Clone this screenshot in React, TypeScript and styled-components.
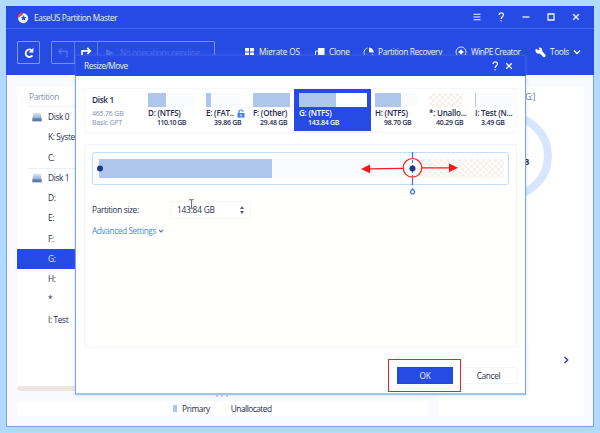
import React from "react";
import styled, { createGlobalStyle } from "styled-components";

const BLUE = "#264be4";
const INK = "#262b4d";
const FILL = "#aec6eb";

const Global = createGlobalStyle`
  * { box-sizing: border-box; }
  body { margin: 0; background: #b0daff; font-family: "Open Sans", "Noto Sans", sans-serif; color: ${INK}; }
  svg { display: block; flex: none; }
`;

const Desktop = styled.div`
  position: relative;
  width: 600px;
  height: 433px;
  padding: 6px;
  overflow: hidden;
`;

const Text = styled.span<{ $size?: number; $track?: number; $color?: string; $weight?: number }>`
  font-size: ${(p) => p.$size ?? 8.3}px;
  letter-spacing: ${(p) => p.$track ?? -0.36}px;
  font-weight: ${(p) => p.$weight ?? 480};
  color: ${(p) => p.$color ?? "inherit"};
  line-height: 12px;
  white-space: nowrap;
`;

const Window = styled.div`
  width: 588px;
  height: 421px;
  display: flex;
  flex-direction: column;
  background: #f8faff;
  border: 1px solid #7e9cf4;
  border-top: 0;
`;

const TitleBar = styled.header`
  height: 23px;
  flex: none;
  margin: 0 -1px;
  padding: 0 12.5px 0 11px;
  display: flex;
  align-items: center;
  background: ${BLUE};
  border-bottom: 1px solid #3e63ee;
  color: #eef2ff;
`;

const AppName = styled.div`
  display: flex;
  align-items: center;
  gap: 5px;
  flex: 1;
  padding-top: 1px;
`;

const WindowControls = styled.div`
  display: flex;
  gap: 12.7px;
  svg { width: 12px; height: 12px; }
`;

const Toolbar = styled.nav`
  height: 46px;
  flex: none;
  margin: 0 -1px;
  padding: 12px 13px 0 11px;
  display: flex;
  background: ${BLUE};
  color: #f3f6ff;
`;

const Reload = styled.button`
  width: 23px;
  height: 23px;
  padding: 0;
  display: grid;
  place-items: center;
  border: 1px solid #7e9bfa;
  border-radius: 1px;
  background: transparent;
`;

const History = styled.div`
  width: 164px;
  height: 23px;
  margin-left: 11px;
  display: flex;
  border: 1px solid #7890f4;
  border-radius: 1px;
`;

const HistoryCell = styled.div`
  width: 23px;
  height: 21px;
  display: grid;
  place-items: center;
  border-right: 1px solid #5e7bf0;
`;

const Pending = styled.div`
  display: flex;
  align-items: center;
  gap: 6px;
  height: 22px;
  padding-left: 8px;
`;

const Tools = styled.div`
  display: grid;
  grid-template-columns: 70px 49px 92px 80px 45px;
  margin-left: 29px;
  height: 22px;
`;

const Tool = styled.div`
  display: flex;
  align-items: center;
  gap: 4px;
`;

const Body = styled.main`
  flex: 1;
  display: grid;
  grid-template-columns: 410px 146px;
  column-gap: 11px;
  padding: 11px 0 10px 10px;
`;

const LeftColumn = styled.div`
  display: flex;
  flex-direction: column;
`;

const Tree = styled.section`
  height: 305px;
  display: flex;
  flex-direction: column;
  background: #fff;
`;

const TreeHeader = styled.div`
  height: 21px;
  margin-left: 12px;
  padding-top: 5px;
  display: flex;
  border-bottom: 1px solid #f0f3fa;
`;

const TreeRow = styled.div<{ $selected?: boolean; $ruled?: boolean }>`
  height: 20.25px;
  padding-left: 15px;
  display: grid;
  grid-template-columns: 16px 1fr;
  align-items: center;
  background: ${(p) => (p.$selected ? BLUE : p.$ruled ? "linear-gradient(90deg, #fff 11px, #e9eff8 11px) top / 100% 1px no-repeat" : "none")};
  color: ${(p) => (p.$selected ? "#e6ecff" : "inherit")};
`;

const ScrollTrack = styled.div`
  height: 5px;
  margin-top: auto;
  width: 260px;
  border-radius: 3px;
  background: #eee5e0;
`;

const Splitter = styled.div`
  height: 10px;
  display: flex;
  align-items: center;
  gap: 3px;
  padding-left: 199px;
`;

const Dot = styled.i`
  width: 2px;
  height: 2px;
  background: #d4cfd6;
`;

const Legend = styled.section`
  height: 15px;
  display: flex;
  align-items: center;
  padding-left: 156px;
  background: #fff;
`;

const Swatch = styled.i<{ $light?: boolean }>`
  width: 4px;
  height: 7px;
  margin-right: 5px;
  margin-left: ${(p) => (p.$light ? 12 : 0)}px;
  background: ${(p) => (p.$light ? "#fdfbf7" : FILL)};
`;

const Details = styled.section`
  display: flex;
  flex-direction: column;
  background: #fff;
`;

const DetailsTitle = styled.div`
  height: 25px;
  padding: 5px 49px 0 0;
  display: flex;
  justify-content: flex-end;
`;

const Gauge = styled.div`
  display: grid;
  margin-left: 26px;
  width: 88px;
  height: 90px;
  align-items: center;
  > * { grid-area: 1 / 1; }
  > span { padding: 12px 23px 0 0; text-align: right; }
`;

const NextButton = styled.div`
  margin: 155px 14px 0 auto;
`;

const Dialog = styled.section`
  position: absolute;
  left: 75px;
  top: 55px;
  width: 451px;
  height: 340px;
  display: flex;
  flex-direction: column;
  background: #fff;
  border: 1px solid #76a5e2;
  border-width: 0 1px 2px;
  border-bottom-color: #9dc3ee;
  box-shadow: 0 0 3px #6f94d855;
`;

const DialogBar = styled.header`
  height: 21px;
  flex: none;
  margin: 0 -1px;
  padding: 0 10px 0 8px;
  display: flex;
  align-items: center;
  background: ${BLUE};
  border: 1px solid #3458e6;
  border-bottom: 0;
  color: #eef2ff;
  > span { flex: 1; }
  svg + svg { margin-left: 2px; }
`;

const DialogBody = styled.div`
  flex: 1;
  display: flex;
  flex-direction: column;
  padding: 12px 8px 0;
`;

const DiskMap = styled.div`
  height: 45px;
  flex: none;
  display: grid;
  grid-template-columns: 59px 58px 47px 45px 77px 54px 46px 44px;
  border: 1px solid #f5f7fd;
  border-radius: 2px;
`;

const DiskInfo = styled.div`
  padding: 5px 0 0 7px;
  display: grid;
  grid-template-rows: 14px 9px 9px;
`;

const Part = styled.div<{ $selected?: boolean; $tail?: number }>`
  padding: 4px ${(p) => p.$tail ?? 8}px 0 ${(p) => (p.$selected ? 5 : 4)}px;
  margin-bottom: 1px;
  display: flex;
  flex-direction: column;
  background: ${(p) => (p.$selected ? BLUE : "none")};
  color: ${(p) => (p.$selected ? "#fff" : "inherit")};
`;

const checker = `repeating-conic-gradient(#f6f1ea 0 25%, #fffefc 0 50%) 0 0 / 6px 6px`;

const Usage = styled.div<{ $used: number; $free?: string; $checked?: boolean }>`
  height: 14px;
  margin-bottom: 1px;
  flex: none;
  background: ${(p) =>
    p.$checked ? checker : `linear-gradient(90deg, ${FILL} ${p.$used}px, ${p.$free ?? "#fafbff"} ${p.$used}px)`};
`;

const PartName = styled.div`
  height: 10px;
  display: flex;
  align-items: center;
  gap: 3px;
`;

const PartSize = styled.div<{ $indent: number }>`
  height: 9px;
  padding-left: ${(p) => p.$indent}px;
  display: flex;
  align-items: center;
`;

const Editor = styled.div`
  height: 204px;
  flex: none;
  margin-top: 11px;
  padding: 7px;
  display: flex;
  flex-direction: column;
  background: #fffffd;
  border: 1px solid #edf4fc;
  border-radius: 3px;
`;

const Slider = styled.div`
  position: relative;
  width: 417px;
  height: 33px;
  padding: 6px 4px 0 6px;
  display: grid;
  grid-template-columns: 173px 140px 7px 85px;
  border: 1px solid #c4dbfa;
  border-radius: 3px;
  background: #fff;
`;

const Segment = styled.div<{ $kind: "used" | "free" | "empty" | "gap" }>`
  height: 19px;
  background: ${(p) => ({ used: FILL, free: "#fafbfe", empty: checker, gap: "none" })[p.$kind]};
`;

const SliderMarks = styled.svg`
  position: absolute;
  left: -1px;
  top: -1px;
  overflow: visible;
`;

const SizeRow = styled.div`
  display: grid;
  grid-template-columns: 79px 80px;
  align-items: center;
  margin-top: 16px;
`;

const SizeInput = styled.div`
  position: relative;
  height: 18px;
  padding: 0 6px 0 5px;
  display: flex;
  align-items: center;
  justify-content: space-between;
  border: 1px solid #f8f4f2;
  background: #fff;
`;

const TextCursor = styled.svg`
  position: absolute;
  left: 16px;
  top: -3px;
`;

const Advanced = styled.div`
  margin-top: 6px;
  display: flex;
  align-items: center;
  gap: 2px;
`;

const Footer = styled.footer`
  display: flex;
  gap: 2px;
  justify-content: flex-end;
  margin-top: 11px;
`;

const Highlight = styled.div`
  width: 73px;
  height: 33px;
  padding: 7px 7px 0 8px;
  border: 1px solid #fb1c24;
`;

const Button = styled.div<{ $primary?: boolean }>`
  width: ${(p) => (p.$primary ? 56 : 54)}px;
  height: 17px;
  margin-top: ${(p) => (p.$primary ? 0 : 8)}px;
  padding-right: ${(p) => (p.$primary ? 0 : 3)}px;
  display: grid;
  place-items: center;
  border: 1px solid ${(p) => (p.$primary ? "#2748d6" : "#f4f5fb")};
  background: ${(p) => (p.$primary ? BLUE : "#fff")};
  color: ${(p) => (p.$primary ? "#f0f4ff" : INK)};
`;

const Stroke = ({ d, size = 12, color = "currentColor", w = 1.3 }: { d: string; size?: number; color?: string; w?: number }) => (
  <svg width={size} height={size} viewBox={`0 0 ${size} ${size}`} fill="none" stroke={color} strokeWidth={w}>
    <path d={d} />
  </svg>
);

const HELP = "M4 4.1C4 1.2 8.4 1.3 8.4 4C8.4 5.7 6.1 5.8 6.1 8M6.1 9.2V10.4";
const CLOSE = "M3.2 3.2L8.8 8.8M8.8 3.2L3.2 8.8";

const Logo = () => (
  <svg width="12" height="12" viewBox="0 0 12 12">
    <circle cx="6.2" cy="6.2" r="5" fill="#f5f7ff" />
    <path d="M.6 5.2C.6 2.2 3.2 0 6.2.8L5.2 3.5L3.2 4.2L2.4 5.6Z" fill="#f04637" />
    <path d="M6.6 3.2L7.4 4.9L9.3 5.2L7.9 6.5L8.2 8.4L6.6 7.5L5 8.4L5.2 6.5L3.9 5.2L5.8 4.9Z" fill={BLUE} />
  </svg>
);

const Disk = () => (
  <svg width="10" height="10" viewBox="0 0 10 10">
    <defs>
      <linearGradient id="disk" x2="0" y2="1">
        <stop stopColor="#dfe8f4" />
        <stop offset="1" stopColor="#8eabd4" />
      </linearGradient>
    </defs>
    <path d="M1.2.7H8.8L9.5 6.5H.5Z" fill="url(#disk)" />
    <path d="M.3 6.2H9.7V9.4H.3Z" fill="#5d7cab" />
  </svg>
);

const tree = [
  { name: "Disk 0", disk: true },
  { name: "K: System" },
  { name: "C:" },
  { name: "Disk 1", disk: true, ruled: true },
  { name: "D:" },
  { name: "E:" },
  { name: "F:" },
  { name: "G:", selected: true },
  { name: "H:" },
  { name: "*" },
  { name: "I: Test" },
];

const parts = [
  { name: "D: (NTFS)", size: "110.10 GB", used: 18, indent: 9, track: -0.5 },
  { name: "E: (FAT..", size: "39.86 GB", used: 5, indent: 8, lock: true },
  { name: "F: (Other)", size: "29.48 GB", used: 38, indent: 7, tail: 4 },
  { name: "G: (NTFS)", size: "143.84 GB", used: 37, indent: 9, selected: true, tail: 4 },
  { name: "H: (NTFS)", size: "98.70 GB", used: 26, indent: 9 },
  { name: "*: Unallo...", size: "40.29 GB", used: 0, indent: 7, empty: true },
  { name: "I: Test (N...", size: "3.49 GB", used: 1, indent: 6, tail: 2 },
];

export default function App() {
  return (
    <Desktop>
      <Global />
      <Window>
        <TitleBar>
          <AppName>
            <Logo />
            <Text $size={8.3} $track={-0.42}>EaseUS Partition Master</Text>
          </AppName>
          <WindowControls>
            <Stroke d="M2.5 3.2H9.5M2.5 6H9.5M2.5 8.8H9.5" w={1.1} />
            <Stroke d={HELP} />
            <Stroke d="M2.5 6H9.5" />
            <Stroke d="M3 3H9V9H3Z" />
            <Stroke d={CLOSE} />
          </WindowControls>
        </TitleBar>
        <Toolbar>
          <Reload>
            <svg width="12" height="12" viewBox="0 0 12 12">
              <path d="M8.4 3.1A3.7 3.7 0 1 0 9.4 8.4" fill="none" stroke="#fff" strokeWidth="1.9" />
              <path d="M10.4.8V5.6H5.8Z" fill="#fff" />
            </svg>
          </Reload>
          <History>
            <HistoryCell>
              <Stroke d="M4.5 1.5L1.8 4.2L4.5 7M2 4.2H10V10" color="#526ff0" w={1.4} />
            </HistoryCell>
            <HistoryCell>
              <Stroke d="M7.3 .8L10.3 3.9L7.3 7M10 3.9H2V10" color="#fff" w={1.7} />
            </HistoryCell>
            <Pending>
              <svg width="8" height="8" viewBox="0 0 8 8"><path d="M0 0L8 4L0 8Z" fill="#4a69ee" /></svg>
              <Text $color="#4c6aec" $track={-0.45}>No operations pending</Text>
            </Pending>
          </History>
          <Tools>
            <Tool>
              <svg width="11" height="10" viewBox="0 0 11 10" fill="#fff"><path d="M1 1H5V4.5H1ZM6 1H10V4.5H6ZM1 5.5H5V9H1ZM6 5.5H10V9H6Z" /></svg>
              <Text $track={-0.2}>Migrate OS</Text>
            </Tool>
            <Tool>
              <svg width="11" height="11" viewBox="0 0 11 11"><path d="M4 1H10.5V8H4Z" fill="#fff" /><path d="M4 4H1.5V10H8V8" fill="none" stroke="#dbe4ff" /></svg>
              <Text $track={-0.3}>Clone</Text>
            </Tool>
            <Tool>
              <svg width="11" height="11" viewBox="0 0 11 11"><path d="M4.5 1A4.6 4.6 0 1 0 10 7" fill="none" stroke="#dbe4ff" /><path d="M6 .5A5 5 0 0 1 10.8 5.6L6 5.2Z" fill="#fff" /></svg>
              <Text>Partition Recovery</Text>
            </Tool>
            <Tool>
              <svg width="12" height="12" viewBox="0 0 12 12"><circle cx="6" cy="6" r="5" fill="none" stroke="#dbe4ff" /><path d="M6 3L7.2 4.8L9 6L7.2 7.2L6 9L4.8 7.2L3 6L4.8 4.8Z" fill="#fff" /></svg>
              <Text $track={-0.5}>WinPE Creator</Text>
            </Tool>
            <Tool>
              <svg width="11" height="11" viewBox="0 0 11 11" fill="#fff"><path d="M1 1.5L3 3.3L4.5 2.7L3.8.7C6 .2 7.7 2 7.3 4.2L10.5 8C11 9.7 9.5 10.8 8.2 10L4.8 6.5C2.5 7.3.3 5.5.4 3.5Z" /></svg>
              <Text>Tools</Text>
              <Stroke size={8} d="M1 2.4L4 5.4L7 2.4" w={1.4} />
            </Tool>
          </Tools>
        </Toolbar>
        <Body>
          <LeftColumn>
            <Tree>
              <TreeHeader><Text $color="#8391b4">Partition</Text></TreeHeader>
              {tree.map((r) => (
                <TreeRow key={r.name} $selected={r.selected} $ruled={r.ruled}>
                  <span>{r.disk && <Disk />}</span>
                  <Text>{r.name}</Text>
                </TreeRow>
              ))}
              <ScrollTrack />
            </Tree>
            <Splitter><Dot /><Dot /><Dot /></Splitter>
            <Legend>
              <Swatch />
              <Text>Primary</Text>
              <Swatch $light />
              <Text $track={-0.5}>Unallocated</Text>
            </Legend>
          </LeftColumn>
          <Details>
            <DetailsTitle><Text $color="#5b6b98">[G:]</Text></DetailsTitle>
            <Gauge>
              <svg width="88" height="88" viewBox="0 0 88 88"><circle cx="44" cy="44" r="40" fill="none" stroke="#d7e5fe" strokeWidth="8" /></svg>
              <Text $weight={700}>GB</Text>
            </Gauge>
            <NextButton><Stroke size={8} d="M2.5 1L5.7 4L2.5 7" color="#2444d8" w={1.5} /></NextButton>
          </Details>
        </Body>
      </Window>
      <Dialog>
        <DialogBar>
          <Text $track={-0.45}>Resize/Move</Text>
          <Stroke d={HELP} />
          <Stroke d={CLOSE} />
        </DialogBar>
        <DialogBody>
          <DiskMap>
            <DiskInfo>
              <Text $weight={650} $size={8.3}>Disk 1</Text>
              <Text $size={7} $track={-0.2} $color="#8390ae">465.76 GB</Text>
              <Text $size={7} $track={-0.2} $color="#8390ae">Basic GPT</Text>
            </DiskInfo>
            {parts.map((p) => (
              <Part key={p.name} $selected={p.selected} $tail={p.tail}>
                <Usage $used={p.used} $free={p.selected ? "#fff" : undefined} $checked={p.empty} />
                <PartName>
                  <Text $size={8} $track={-0.22} $weight={600}>{p.name}</Text>
                  {p.lock && (
                    <svg width="8" height="9" viewBox="0 0 8 9"><path d="M2 4V2.8C2 .4 6 .4 6 2.8" fill="none" stroke="#4380ee" strokeWidth="1.2" /><path d="M.5 4H7.5V8.6H.5Z" fill="#4380ee" /><path d="M4 5.2V7.4" stroke="#fff" /></svg>
                  )}
                </PartName>
                <PartSize $indent={p.indent}><Text $size={7} $track={p.track ?? -0.25} $weight={600}>{p.size}</Text></PartSize>
              </Part>
            ))}
          </DiskMap>
          <Editor>
            <Slider>
              <Segment $kind="used" />
              <Segment $kind="free" />
              <Segment $kind="gap" />
              <Segment $kind="empty" />
              <SliderMarks width="417" height="46" viewBox="0 0 417 46">
                <circle cx="8" cy="16.5" r="3" fill="#20368f" />
                <path d="M320.5 0V6M320.5 26V33" stroke="#3a70e8" strokeWidth="1.2" />
                <path d="M320.5 8V25" stroke="#3a70e8" strokeDasharray="3 2" />
                <circle cx="320.5" cy="16.5" r="3" fill="#20368f" />
                <path d="M320.5 36.8L322.3 39.2C323.7 42.7 317.3 42.7 318.7 39.2Z" fill="#fff" stroke="#3a70e8" strokeWidth="1.3" />
                <g stroke="#fb1c1c" strokeWidth="1.2" fill="none">
                  <circle cx="320.5" cy="15.8" r="9.3" />
                  <path d="M311 16.3L276 16.8M330 15.8H360" />
                </g>
                <path d="M269 17L278 12.5V21.2ZM366 15.8L357 11.4V20.2Z" fill="#fb1414" />
              </SliderMarks>
            </Slider>
            <SizeRow>
              <Text>Partition size:</Text>
              <SizeInput>
                <Text $track={-0.2}>143.84 GB</Text>
                <svg width="4" height="8" viewBox="0 0 4 8" fill="#535873"><path d="M2 0L4 3H0ZM0 5H4L2 8Z" /></svg>
                <TextCursor width="7" height="10" viewBox="0 0 7 10" fill="none" stroke="#77717d"><path d="M1 .7H6M3.5 1V9M1 9.3H6" /></TextCursor>
              </SizeInput>
            </SizeRow>
            <Advanced>
              <Text $color="#4489ec" $track={-0.4}>Advanced Settings</Text>
              <Stroke size={6} d="M1 1.8L3 3.8L5 1.8" color="#3579e8" w={1.2} />
            </Advanced>
          </Editor>
          <Footer>
            <Highlight><Button $primary><Text>OK</Text></Button></Highlight>
            <Button><Text>Cancel</Text></Button>
          </Footer>
        </DialogBody>
      </Dialog>
    </Desktop>
  );
}
